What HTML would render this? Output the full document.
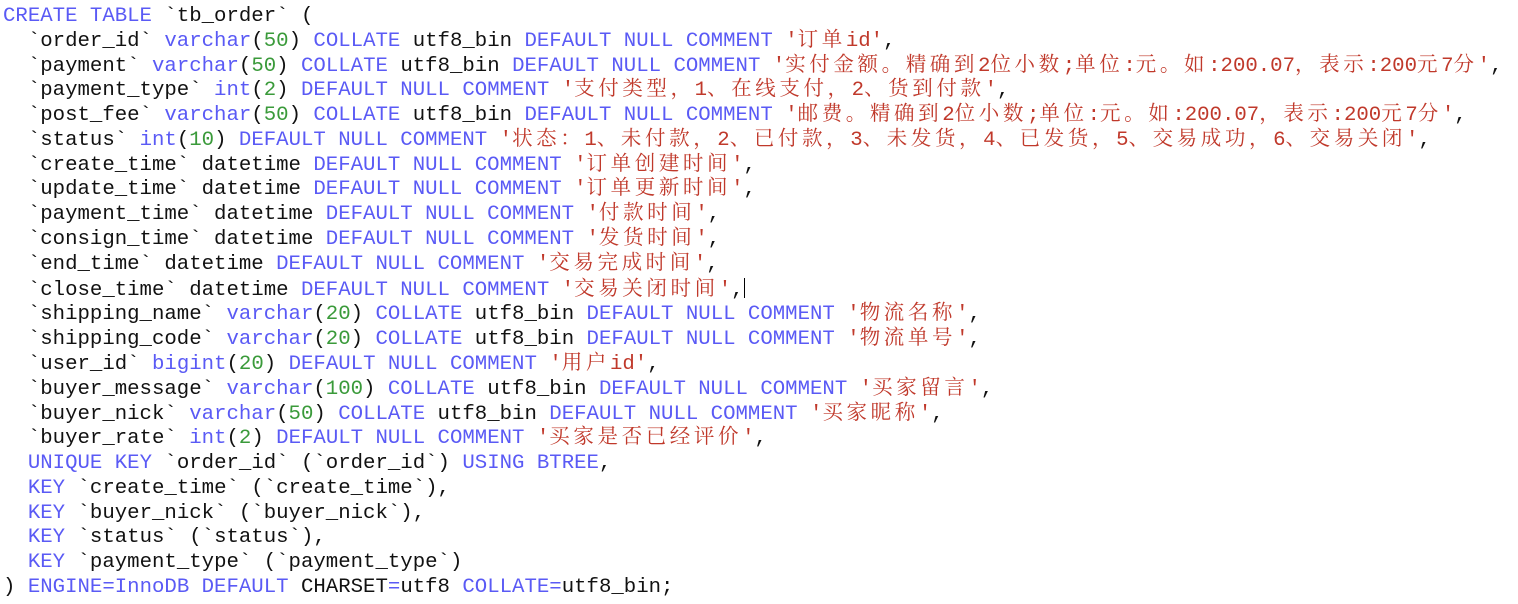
<!DOCTYPE html>
<html><head><meta charset="utf-8"><style>
html,body{margin:0;padding:0;background:#fff;width:1518px;height:604px;overflow:hidden}
pre{margin:0;padding:5px 0 0 3px;font-family:"Liberation Mono",monospace;font-size:20.7px;line-height:24.78px;color:#111;}
.k{color:#5a5af5}.n{color:#3a9a3a}.s{color:#c0392b}
.z{letter-spacing:3.6px;font-family:"Noto Serif CJK SC","Noto Sans CJK SC",serif;font-size:20.5px;line-height:0}
.cur{display:inline-block;width:1px;height:20px;background:#000;vertical-align:-3px;line-height:0}
</style></head><body><pre><span class="k">CREATE TABLE</span> `tb_order` (
  `order_id` <span class="k">varchar</span>(<span class="n">50</span>) <span class="k">COLLATE</span> utf8_bin <span class="k">DEFAULT NULL COMMENT</span> <span class="s">'<span class="z">订单</span>id'</span>,
  `payment` <span class="k">varchar</span>(<span class="n">50</span>) <span class="k">COLLATE</span> utf8_bin <span class="k">DEFAULT NULL COMMENT</span> <span class="s">'<span class="z">实付金额。精确到</span>2<span class="z">位小数</span>;<span class="z">单位</span>:<span class="z">元。如</span>:200.07<span class="z">，表示</span>:200<span class="z">元</span>7<span class="z">分</span>'</span>,
  `payment_type` <span class="k">int</span>(<span class="n">2</span>) <span class="k">DEFAULT NULL COMMENT</span> <span class="s">'<span class="z">支付类型，</span>1<span class="z">、在线支付，</span>2<span class="z">、货到付款</span>'</span>,
  `post_fee` <span class="k">varchar</span>(<span class="n">50</span>) <span class="k">COLLATE</span> utf8_bin <span class="k">DEFAULT NULL COMMENT</span> <span class="s">'<span class="z">邮费。精确到</span>2<span class="z">位小数</span>;<span class="z">单位</span>:<span class="z">元。如</span>:200.07<span class="z">，表示</span>:200<span class="z">元</span>7<span class="z">分</span>'</span>,
  `status` <span class="k">int</span>(<span class="n">10</span>) <span class="k">DEFAULT NULL COMMENT</span> <span class="s">'<span class="z">状态：</span>1<span class="z">、未付款，</span>2<span class="z">、已付款，</span>3<span class="z">、未发货，</span>4<span class="z">、已发货，</span>5<span class="z">、交易成功，</span>6<span class="z">、交易关闭</span>'</span>,
  `create_time` datetime <span class="k">DEFAULT NULL COMMENT</span> <span class="s">'<span class="z">订单创建时间</span>'</span>,
  `update_time` datetime <span class="k">DEFAULT NULL COMMENT</span> <span class="s">'<span class="z">订单更新时间</span>'</span>,
  `payment_time` datetime <span class="k">DEFAULT NULL COMMENT</span> <span class="s">'<span class="z">付款时间</span>'</span>,
  `consign_time` datetime <span class="k">DEFAULT NULL COMMENT</span> <span class="s">'<span class="z">发货时间</span>'</span>,
  `end_time` datetime <span class="k">DEFAULT NULL COMMENT</span> <span class="s">'<span class="z">交易完成时间</span>'</span>,
  `close_time` datetime <span class="k">DEFAULT NULL COMMENT</span> <span class="s">'<span class="z">交易关闭时间</span>'</span>,<span class="cur"></span>
  `shipping_name` <span class="k">varchar</span>(<span class="n">20</span>) <span class="k">COLLATE</span> utf8_bin <span class="k">DEFAULT NULL COMMENT</span> <span class="s">'<span class="z">物流名称</span>'</span>,
  `shipping_code` <span class="k">varchar</span>(<span class="n">20</span>) <span class="k">COLLATE</span> utf8_bin <span class="k">DEFAULT NULL COMMENT</span> <span class="s">'<span class="z">物流单号</span>'</span>,
  `user_id` <span class="k">bigint</span>(<span class="n">20</span>) <span class="k">DEFAULT NULL COMMENT</span> <span class="s">'<span class="z">用户</span>id'</span>,
  `buyer_message` <span class="k">varchar</span>(<span class="n">100</span>) <span class="k">COLLATE</span> utf8_bin <span class="k">DEFAULT NULL COMMENT</span> <span class="s">'<span class="z">买家留言</span>'</span>,
  `buyer_nick` <span class="k">varchar</span>(<span class="n">50</span>) <span class="k">COLLATE</span> utf8_bin <span class="k">DEFAULT NULL COMMENT</span> <span class="s">'<span class="z">买家昵称</span>'</span>,
  `buyer_rate` <span class="k">int</span>(<span class="n">2</span>) <span class="k">DEFAULT NULL COMMENT</span> <span class="s">'<span class="z">买家是否已经评价</span>'</span>,
  <span class="k">UNIQUE KEY</span> `order_id` (`order_id`) <span class="k">USING BTREE</span>,
  <span class="k">KEY</span> `create_time` (`create_time`),
  <span class="k">KEY</span> `buyer_nick` (`buyer_nick`),
  <span class="k">KEY</span> `status` (`status`),
  <span class="k">KEY</span> `payment_type` (`payment_type`)
) <span class="k">ENGINE=InnoDB DEFAULT</span> CHARSET<span class="k">=</span>utf8 <span class="k">COLLATE</span><span class="k">=</span>utf8_bin;
</pre></body></html>
